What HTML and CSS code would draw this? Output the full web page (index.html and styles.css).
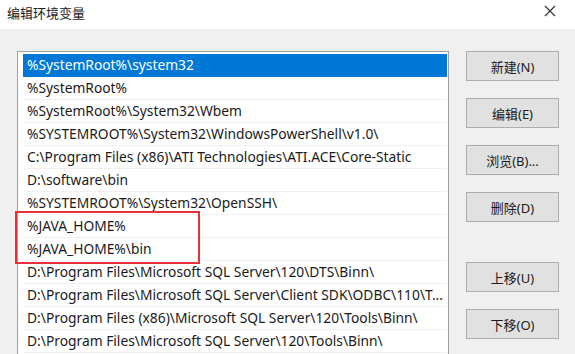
FILE: index.html
```html
<!DOCTYPE html>
<html>
  <head>
    <title>编辑环境变量</title>
    <link rel="stylesheet" href="styles.css">
  </head>
  <body>
    <div class="dialog">
      <div class="titlebar">
        <span class="title">编辑环境变量</span>
        <svg class="close" width="12" height="12" viewBox="0 0 12 12">
          <path d="M1 1 L11 11 M11 1 L1 11" stroke="#333" stroke-width="1.2" fill="none"/>
        </svg>
      </div>
      <div class="content">
        <div class="listbox">
          <div class="row selected">%SystemRoot%\system32</div>
          <div class="row">%SystemRoot%</div>
          <div class="row">%SystemRoot%\System32\Wbem</div>
          <div class="row">%SYSTEMROOT%\System32\WindowsPowerShell\v1.0\</div>
          <div class="row">C:\Program Files (x86)\ATI Technologies\ATI.ACE\Core-Static</div>
          <div class="row">D:\software\bin</div>
          <div class="row">%SYSTEMROOT%\System32\OpenSSH\</div>
          <div class="row">%JAVA_HOME%</div>
          <div class="row">%JAVA_HOME%\bin</div>
          <div class="row">D:\Program Files\Microsoft SQL Server\120\DTS\Binn\</div>
          <div class="row">D:\Program Files\Microsoft SQL Server\Client SDK\ODBC\110\T...</div>
          <div class="row">D:\Program Files (x86)\Microsoft SQL Server\120\Tools\Binn\</div>
          <div class="row">D:\Program Files\Microsoft SQL Server\120\Tools\Binn\</div>
          <div class="highlight"></div>
        </div>
        <div class="buttons">
          <button>新建(N)</button>
          <button>编辑(E)</button>
          <button>浏览(B)...</button>
          <button>删除(D)</button>
          <button class="spaced">上移(U)</button>
          <button>下移(O)</button>
        </div>
      </div>
    </div>
  </body>
</html>
```

FILE: styles.css
```css
* {
  box-sizing: border-box;
}

body {
  margin: 0;
  padding: 0;
  font-family: "Noto Sans", "Noto Sans CJK SC", sans-serif;
  font-size: 13.8px;
  color: #1a1a1a;
  background: #f0f0f0;
  overflow: hidden;
}

.dialog {
  width: 575px;
  height: 354px;
}

.titlebar {
  height: 29px;
  background: #fff;
  display: flex;
  align-items: center;
  justify-content: space-between;
  padding: 0 19px 5px 7px;
}

.title {
  font-family: "Noto Sans CJK SC", sans-serif;
  font-size: 13px;
  color: #222;
}

.close {
  margin-top: -2px;
}

.content {
  display: flex;
  padding: 22px 0 0 17px;
}

.listbox {
  position: relative;
  width: 432px;
  height: 320px;
  background: #fff;
  border: 1px solid #a0a0a0;
  border-bottom: none;
  padding: 2px 1px 0 5px;
}

.row {
  height: 23px;
  line-height: 22px;
  padding-left: 4px;
  border-bottom: 1px solid #f0f0f0;
  white-space: nowrap;
  overflow: hidden;
}

.row.selected {
  background: #0078d7;
  color: #fff;
  border-bottom-color: #0078d7;
}

.highlight {
  position: absolute;
  left: -3px;
  top: 159px;
  width: 185px;
  height: 53px;
  border: 2px solid #e8303a;
}

.buttons {
  display: flex;
  flex-direction: column;
  margin-left: 17px;
}

button {
  width: 93px;
  height: 30px;
  margin-bottom: 17px;
  font-family: "Noto Sans", "Noto Sans CJK SC", sans-serif;
  font-size: 13px;
  color: #1a1a1a;
  background: #e1e1e1;
  border: 1px solid #adadad;
  padding: 0;
}

button.spaced {
  margin-top: 23px;
}
```
